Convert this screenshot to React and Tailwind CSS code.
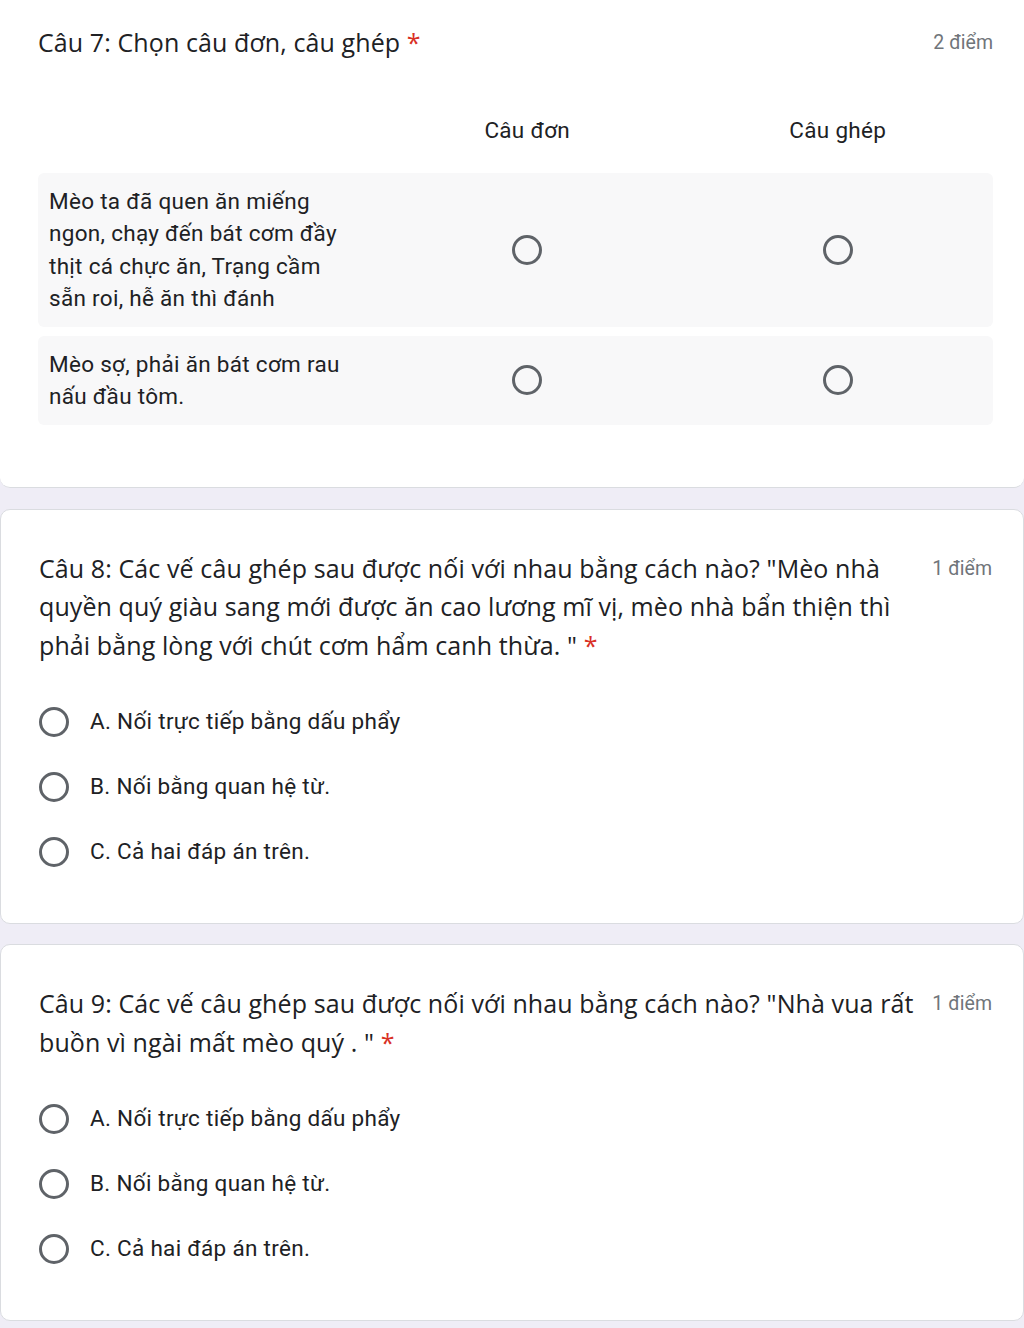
import React from "react";

const options = ["A. Nối trực tiếp bằng dấu phẩy", "B. Nối bằng quan hệ từ.", "C. Cả hai đáp án trên."];

const gridRows = [
  "Mèo ta đã quen ăn miếng ngon, chạy đến bát cơm đầy thịt cá chực ăn, Trạng cầm sẵn roi, hễ ăn thì đánh",
  "Mèo sợ, phải ăn bát cơm rau nấu đầu tôm.",
];

const body = "text-[22.5px] tracking-[0.3px] text-[#202124] [font-family:Roboto,sans-serif]";

function Radio() {
  return <span className="block size-[30px] shrink-0 rounded-full border-[3px] border-[#5f6368]" />;
}

function Title({ text, points }) {
  return (
    <div className="flex items-start justify-between gap-[10px]">
      <h2 className="flex-1 text-[25px] leading-[38.5px] tracking-[0.1px] text-[#202124] [font-family:'Open_Sans',sans-serif]">
        {text} <span className="text-[#d93025]">*</span>
      </h2>
      <span className="shrink-0 pt-[9px] text-[19.5px] leading-[22px] text-[#70757a] [font-family:Roboto,sans-serif]">
        {points}
      </span>
    </div>
  );
}

function ChoiceCard({ text, points }) {
  return (
    <section className="rounded-[10px] border border-[#dadce0] bg-white pl-[38px] pr-[31px] pt-[39px] pb-[39px]">
      <Title text={text} points={points} />
      <div className="mt-[25px] flex flex-col">
        {options.map((o) => (
          <div key={o} className="flex h-[65px] items-center gap-[21px]">
            <Radio />
            <span className={body}>{o}</span>
          </div>
        ))}
      </div>
    </section>
  );
}

export default function App() {
  return (
    <div className="min-h-[1328px] bg-[#efedf6]">
      {/* Câu 7 - grid */}
      <section className="rounded-b-[10px] border-b border-[#dadce0] bg-white pl-[38px] pr-[31px] pt-[23px] pb-[62px]">
        <Title text="Câu 7: Chọn câu đơn, câu ghép" points="2 điểm" />
        <div className={"mt-[49px] grid h-[40px] grid-cols-[334px_1fr_1fr] items-center " + body}>
          <span />
          <span className="text-center">Câu đơn</span>
          <span className="text-center">Câu ghép</span>
        </div>
        <div className="mt-[22px] flex flex-col gap-[9px]">
          {gridRows.map((r) => (
            <div key={r} className="grid grid-cols-[334px_1fr_1fr] items-center rounded-[6px] bg-[#f8f8f9] py-[12px]">
              <p className={"pl-[11px] pr-[14px] leading-[32.5px] " + body}>{r}</p>
              <div className="flex justify-center"><Radio /></div>
              <div className="flex justify-center"><Radio /></div>
            </div>
          ))}
        </div>
      </section>

      <div className="h-[21px]" />
      <ChoiceCard
        text={'Câu 8: Các vế câu ghép sau được nối với nhau bằng cách nào? "Mèo nhà quyền quý giàu sang mới được ăn cao lương mĩ vị, mèo nhà bẩn thiện thì phải bằng lòng với chút cơm hẩm canh thừa. "'}
        points="1 điểm"
      />
      <div className="h-[20px]" />
      <ChoiceCard
        text={'Câu 9: Các vế câu ghép sau được nối với nhau bằng cách nào? "Nhà vua rất buồn vì ngài mất mèo quý . "'}
        points="1 điểm"
      />
    </div>
  );
}
